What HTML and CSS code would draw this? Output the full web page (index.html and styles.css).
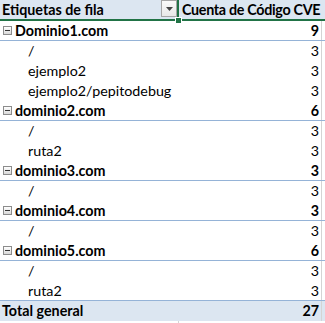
FILE: index.html
```html
<!DOCTYPE html>
<html lang="es">
<head>
<meta charset="utf-8">
<link rel="stylesheet" href="styles.css">
</head>
<body>
<div class="sheet">
  <div class="row header">
    <div class="c1"><span class="htext">Etiquetas de fila</span><span class="dd"><svg width="7" height="4" viewBox="0 0 7 4"><path d="M0 0H7L3.5 4Z" fill="#444"/></svg></span><span class="handle"></span></div>
    <div class="c2">Cuenta de Código CVE</div>
  </div>

  <div class="row group"><div class="c1"><span class="minus"></span>Dominio1.com</div><div class="c2">9</div></div>
  <div class="row child"><div class="c1">/</div><div class="c2">3</div></div>
  <div class="row child"><div class="c1">ejemplo2</div><div class="c2">3</div></div>
  <div class="row child"><div class="c1">ejemplo2/pepitodebug</div><div class="c2">3</div></div>

  <div class="row group"><div class="c1"><span class="minus"></span>dominio2.com</div><div class="c2">6</div></div>
  <div class="row child"><div class="c1">/</div><div class="c2">3</div></div>
  <div class="row child"><div class="c1">ruta2</div><div class="c2">3</div></div>

  <div class="row group"><div class="c1"><span class="minus"></span>dominio3.com</div><div class="c2">3</div></div>
  <div class="row child"><div class="c1">/</div><div class="c2">3</div></div>

  <div class="row group"><div class="c1"><span class="minus"></span>dominio4.com</div><div class="c2">3</div></div>
  <div class="row child"><div class="c1">/</div><div class="c2">3</div></div>

  <div class="row group"><div class="c1"><span class="minus"></span>dominio5.com</div><div class="c2">6</div></div>
  <div class="row child"><div class="c1">/</div><div class="c2">3</div></div>
  <div class="row child last"><div class="c1">ruta2</div><div class="c2">3</div></div>

  <div class="row total"><div class="c1">Total general</div><div class="c2">27</div></div>
  <div class="row blank"><div class="c1"></div><div class="c2"></div></div>
</div>
</body>
</html>
```

FILE: styles.css
```css
html, body {
  margin: 0;
  padding: 0;
  background: #fff;
}
.sheet {
  width: 325px;
  font-family: "Lato", "Liberation Sans", sans-serif;
  font-size: 14.3px;
  color: #000;
}
.row {
  display: flex;
  height: 20px;
  line-height: 20px;
  box-sizing: border-box;
}
.c1 {
  width: 178px;
  flex: none;
  box-sizing: border-box;
  white-space: nowrap;
  display: flex;
  align-items: center;
  position: relative;
}
.c2 {
  width: 144px;
  flex: none;
  box-sizing: border-box;
  text-align: right;
  padding-right: 2px;
  white-space: nowrap;
  border-right: 1px solid #d4d4d4;
}
.header {
  background: #dce6f1;
  font-weight: bold;
  border-bottom: 2px solid #217346;
  height: 21px;
  line-height: 19px;
}
.header .c1 {
  padding-left: 2px;
  border-right: 2px solid #217346;
  width: 179px;
}
.header .c2 {
  border-right: none;
  width: 146px;
  text-align: left;
  padding-left: 3px;
  letter-spacing: -0.3px;
}
.htext { flex: 1; }
.dd {
  width: 14px;
  height: 15px;
  margin-top: -2px;
  border: 1px solid #a6a6a6;
  background: linear-gradient(#fafafa, #e8e8e8);
  display: flex;
  align-items: center;
  justify-content: center;
}
.handle {
  position: absolute;
  right: -5px;
  bottom: -5px;
  width: 5px;
  height: 5px;
  background: #217346;
  border: 1px solid #fff;
}
.group {
  font-weight: bold;
  border-bottom: 1px solid #95b3d7;
}
.group .c1 { padding-left: 3px; }
.minus {
  width: 7px;
  height: 7px;
  border: 1px solid #8c8c8c;
  background: linear-gradient(#ffffff, #d9d9d9);
  margin-right: 3px;
  position: relative;
  flex: none;
}
.minus::after {
  content: "";
  position: absolute;
  left: 1px;
  top: 3px;
  width: 5px;
  height: 1px;
  background: #333;
}
.child .c1 { padding-left: 28px; }
.child.last { border-bottom: 1px solid #95b3d7; }
.total {
  background: #dce6f1;
  font-weight: bold;
}
.total .c1 { padding-left: 2px; }
.blank {
  height: 3px;
}
.blank .c1 { border-right: 1px solid #d4d4d4; width: 179px; }
.blank .c2 { border-right: none; }
```
